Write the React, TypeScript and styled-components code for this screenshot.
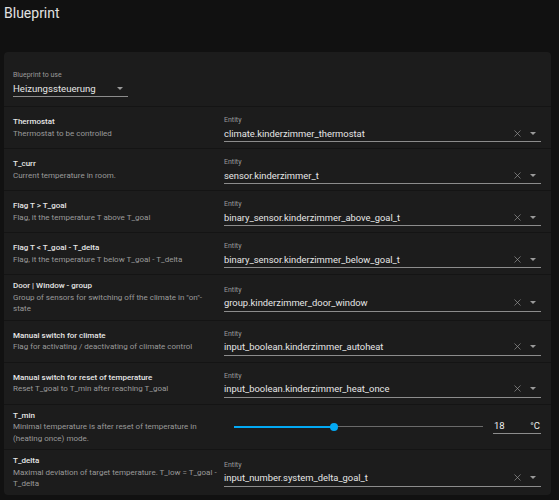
import React from "react";
import styled, { createGlobalStyle } from "styled-components";
import { X } from "lucide-react";

const GlobalStyle = createGlobalStyle`
  body {
    margin: 0;
    background: #111111;
    font-family: Roboto, "Liberation Sans", sans-serif;
    color: #e1e1e1;
  }
`;

const Page = styled.div`
  padding: 0 8px 0 4px;
`;

const Title = styled.h1`
  margin: 0;
  height: 52px;
  padding-top: 5px;
  box-sizing: border-box;
  font-size: 14px;
  font-weight: 400;
  color: #e1e1e1;
`;

const Card = styled.div`
  background: #1c1c1c;
  border-radius: 4px;
  overflow: hidden;
`;

const Header = styled.div`
  height: 55px;
  box-sizing: border-box;
  padding: 16px 9px 0;
  border-bottom: 1px solid #141414;
`;

const Row = styled.div`
  display: grid;
  grid-template-columns: 205px 1fr;
  column-gap: 6px;
  align-items: center;
  min-height: 42px;
  box-sizing: border-box;
  padding: 5px 10px 5px 9px;
  border-bottom: 1px solid #141414;
  &:last-child {
    border-bottom: none;
  }
`;

const Info = styled.div`
  line-height: 11.5px;
`;

const Name = styled.div`
  font-size: 8px;
  font-weight: 500;
  color: #e6e6e6;
`;

const Desc = styled.div`
  font-size: 8px;
  color: #9a9a9a;
`;

const Field = styled.div<{ $width?: string }>`
  width: ${(p) => p.$width || "100%"};
  border-bottom: 1px solid #8c8c8c;
  padding-bottom: 1px;
  margin-top: 3px;
`;

const Label = styled.div`
  font-size: 7px;
  color: #9a9a9a;
  line-height: 9px;
  margin-bottom: 1px;
`;

const ValueLine = styled.div`
  display: flex;
  align-items: center;
  height: 14px;
`;

const Value = styled.span<{ $size?: number }>`
  flex: 1;
  font-size: ${(p) => p.$size || 9.4}px;
  color: #e6e6e6;
  white-space: nowrap;
`;

const Clear = styled(X)`
  color: #a0a0a0;
  margin-right: 7px;
`;

const Caret = styled.span`
  width: 0;
  height: 0;
  border-left: 3px solid transparent;
  border-right: 3px solid transparent;
  border-top: 3px solid #9a9a9a;
  margin-right: 5px;
`;

const SliderLine = styled.div`
  display: flex;
  align-items: center;
  gap: 10px;
  padding-left: 10px;
`;

const Track = styled.div`
  position: relative;
  flex: 1;
  height: 1px;
  background: #6a6a6a;
`;

const Fill = styled.div`
  height: 2px;
  margin-top: -0.5px;
  background: #03a9f4;
`;

const Thumb = styled.div`
  position: absolute;
  top: 50%;
  width: 8px;
  height: 8px;
  margin: -4px 0 0 -4px;
  border-radius: 50%;
  background: #03a9f4;
`;

const NumberBox = styled.div`
  width: 48px;
  display: flex;
  justify-content: space-between;
  font-size: 9.5px;
  color: #f0f0f0;
  border-bottom: 1px solid #8c8c8c;
  padding: 0 1px 2px;
  box-sizing: border-box;
`;

type Item = {
  name: string;
  desc: string;
  entity?: string;
  slider?: { value: number; min: number; max: number; unit: string };
};

const items: Item[] = [
  { name: "Thermostat", desc: "Thermostat to be controlled", entity: "climate.kinderzimmer_thermostat" },
  { name: "T_curr", desc: "Current temperature in room.", entity: "sensor.kinderzimmer_t" },
  { name: "Flag T > T_goal", desc: "Flag, it the temperature T above T_goal", entity: "binary_sensor.kinderzimmer_above_goal_t" },
  { name: "Flag T < T_goal - T_delta", desc: "Flag, it the temperature T below T_goal - T_delta", entity: "binary_sensor.kinderzimmer_below_goal_t" },
  { name: "Door | Window - group", desc: "Group of sensors for switching off the climate in \"on\"-state", entity: "group.kinderzimmer_door_window" },
  { name: "Manual switch for climate", desc: "Flag for activating / deactivating of climate control", entity: "input_boolean.kinderzimmer_autoheat" },
  { name: "Manual switch for reset of temperature", desc: "Reset T_goal to T_min after reaching T_goal", entity: "input_boolean.kinderzimmer_heat_once" },
  { name: "T_min", desc: "Minimal temperature is after reset of temperature in (heating once) mode.", slider: { value: 18, min: 10, max: 30, unit: "°C" } },
  { name: "T_delta", desc: "Maximal deviation of target temperature. T_low = T_goal - T_delta", entity: "input_number.system_delta_goal_t" },
];

function EntityPicker({ value }: { value: string }) {
  return (
    <Field>
      <Label>Entity</Label>
      <ValueLine>
        <Value>{value}</Value>
        <Clear size={11} strokeWidth={1.4} />
        <Caret />
      </ValueLine>
    </Field>
  );
}

function NumberSlider({ value, min, max, unit }: NonNullable<Item["slider"]>) {
  const pct = ((value - min) / (max - min)) * 100;
  return (
    <SliderLine>
      <Track>
        <Fill style={{ width: `${pct}%` }} />
        <Thumb style={{ left: `${pct}%` }} />
      </Track>
      <NumberBox>
        <span>{value}</span>
        <span>{unit}</span>
      </NumberBox>
    </SliderLine>
  );
}

export default function App() {
  return (
    <Page>
      <GlobalStyle />
      <Title>Blueprint</Title>
      <Card>
        <Header>
          <Field $width="115px">
            <Label>Blueprint to use</Label>
            <ValueLine>
              <Value $size={9.6}>Heizungssteuerung</Value>
              <Caret />
            </ValueLine>
          </Field>
        </Header>
        {items.map((it) => (
          <Row key={it.name}>
            <Info>
              <Name>{it.name}</Name>
              <Desc>{it.desc}</Desc>
            </Info>
            {it.slider ? <NumberSlider {...it.slider} /> : <EntityPicker value={it.entity!} />}
          </Row>
        ))}
      </Card>
    </Page>
  );
}
